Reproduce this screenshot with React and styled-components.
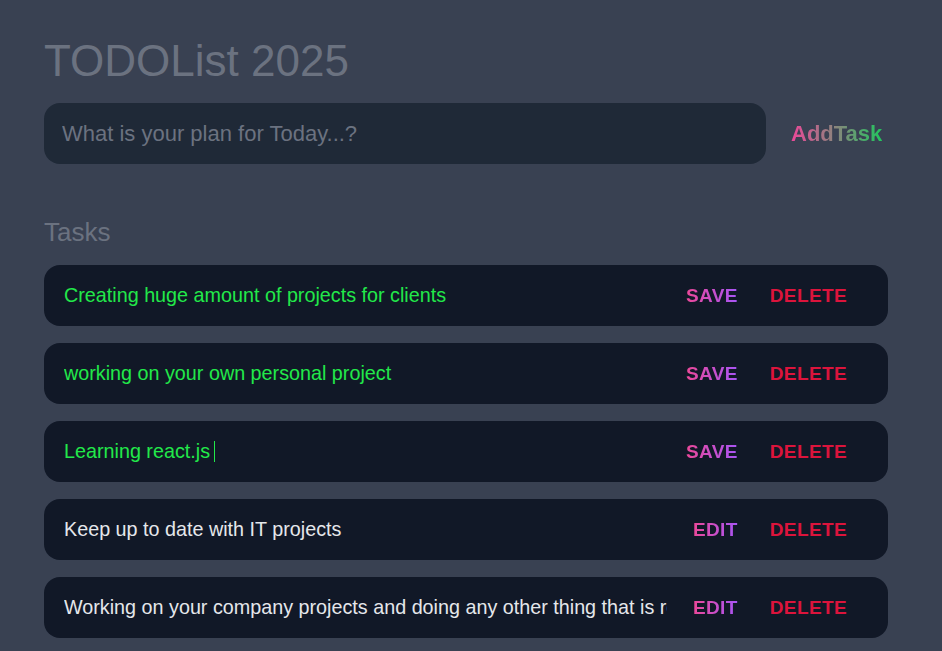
import React from "react";
import styled, { createGlobalStyle } from "styled-components";

const GlobalStyle = createGlobalStyle`
  html, body {
    margin: 0;
    padding: 0;
    background: #394152;
    font-family: "Liberation Sans", Arial, sans-serif;
  }
  * { box-sizing: border-box; }
`;

const Page = styled.main`
  min-height: 651px;
  background: #394152;
  padding: 35px 54px 0 44px;
  display: flex;
  flex-direction: column;
`;

const Title = styled.h1`
  margin: 0;
  font-size: 44px;
  font-weight: 400;
  line-height: 51px;
  color: #6b7280;
`;

const AddRow = styled.form`
  margin-top: 17px;
  display: flex;
  align-items: center;
  height: 61px;
`;

const AddInput = styled.input`
  flex: 1;
  height: 61px;
  border: none;
  outline: none;
  border-radius: 16px;
  background: #1f2937;
  padding: 0 18px;
  font-family: inherit;
  font-size: 22px;
  color: #e5e7eb;
  &::placeholder { color: #6b7280; }
`;

const AddButton = styled.button`
  width: 122px;
  height: 61px;
  border: none;
  background: transparent;
  font-family: inherit;
  font-size: 22px;
  font-weight: 700;
  padding: 0 0 0 25px;
  text-align: left;
  cursor: pointer;
  span {
    background: linear-gradient(90deg, #ec4899, #22c55e);
    -webkit-background-clip: text;
    background-clip: text;
    color: transparent;
  }
`;

const SectionTitle = styled.h2`
  margin: 53px 0 0;
  font-size: 26px;
  font-weight: 400;
  line-height: 30px;
  color: #6b7280;
`;

const List = styled.ul`
  list-style: none;
  margin: 18px 0 0;
  padding: 0;
  display: flex;
  flex-direction: column;
  gap: 17px;
`;

const TaskRow = styled.li`
  height: 61px;
  border-radius: 16px;
  background: #111827;
  display: flex;
  align-items: center;
  padding: 0 25px 0 20px;
`;

const TaskText = styled.div`
  flex: 1;
  min-width: 0;
  margin-right: 10px;
  overflow: hidden;
  white-space: nowrap;
  font-size: 19.75px;
  color: ${(p) => (p.$editing ? "#22e84a" : "#e5e7eb")};
  display: flex;
  align-items: center;
`;

const Caret = styled.span`
  display: inline-block;
  flex: none;
  width: 1px;
  height: 21px;
  margin-left: 4px;
  background: #22e84a;
`;

const ActionButton = styled.button`
  flex: none;
  border: none;
  background: transparent;
  padding: 0 16px;
  font-family: inherit;
  font-size: 19px;
  font-weight: 700;
  letter-spacing: 0.02em;
  cursor: pointer;
  color: #dc143c;
`;

const GradientLabel = styled.span`
  background: linear-gradient(90deg, #ec4899, #a855f7);
  -webkit-background-clip: text;
  background-clip: text;
  color: transparent;
`;

const tasks = [
  { text: "Creating huge amount of projects for clients", editing: true },
  { text: "working on your own personal project", editing: true },
  { text: "Learning react.js", editing: true, focused: true },
  { text: "Keep up to date with IT projects", editing: false },
  {
    text: "Working on your company projects and doing any other thing that is required",
    editing: false,
  },
];

export default function App() {
  return (
    <>
      <GlobalStyle />
      <Page>
        <Title>TODOList 2025</Title>
        <AddRow onSubmit={(e) => e.preventDefault()}>
          <AddInput placeholder="What is your plan for Today...?" />
          <AddButton type="submit">
            <span>AddTask</span>
          </AddButton>
        </AddRow>
        <SectionTitle>Tasks</SectionTitle>
        <List>
          {tasks.map((t) => (
            <TaskRow key={t.text}>
              <TaskText $editing={t.editing}>
                {t.text}
                {t.focused && <Caret />}
              </TaskText>
              <ActionButton>
                <GradientLabel>{t.editing ? "SAVE" : "EDIT"}</GradientLabel>
              </ActionButton>
              <ActionButton>DELETE</ActionButton>
            </TaskRow>
          ))}
        </List>
      </Page>
    </>
  );
}
